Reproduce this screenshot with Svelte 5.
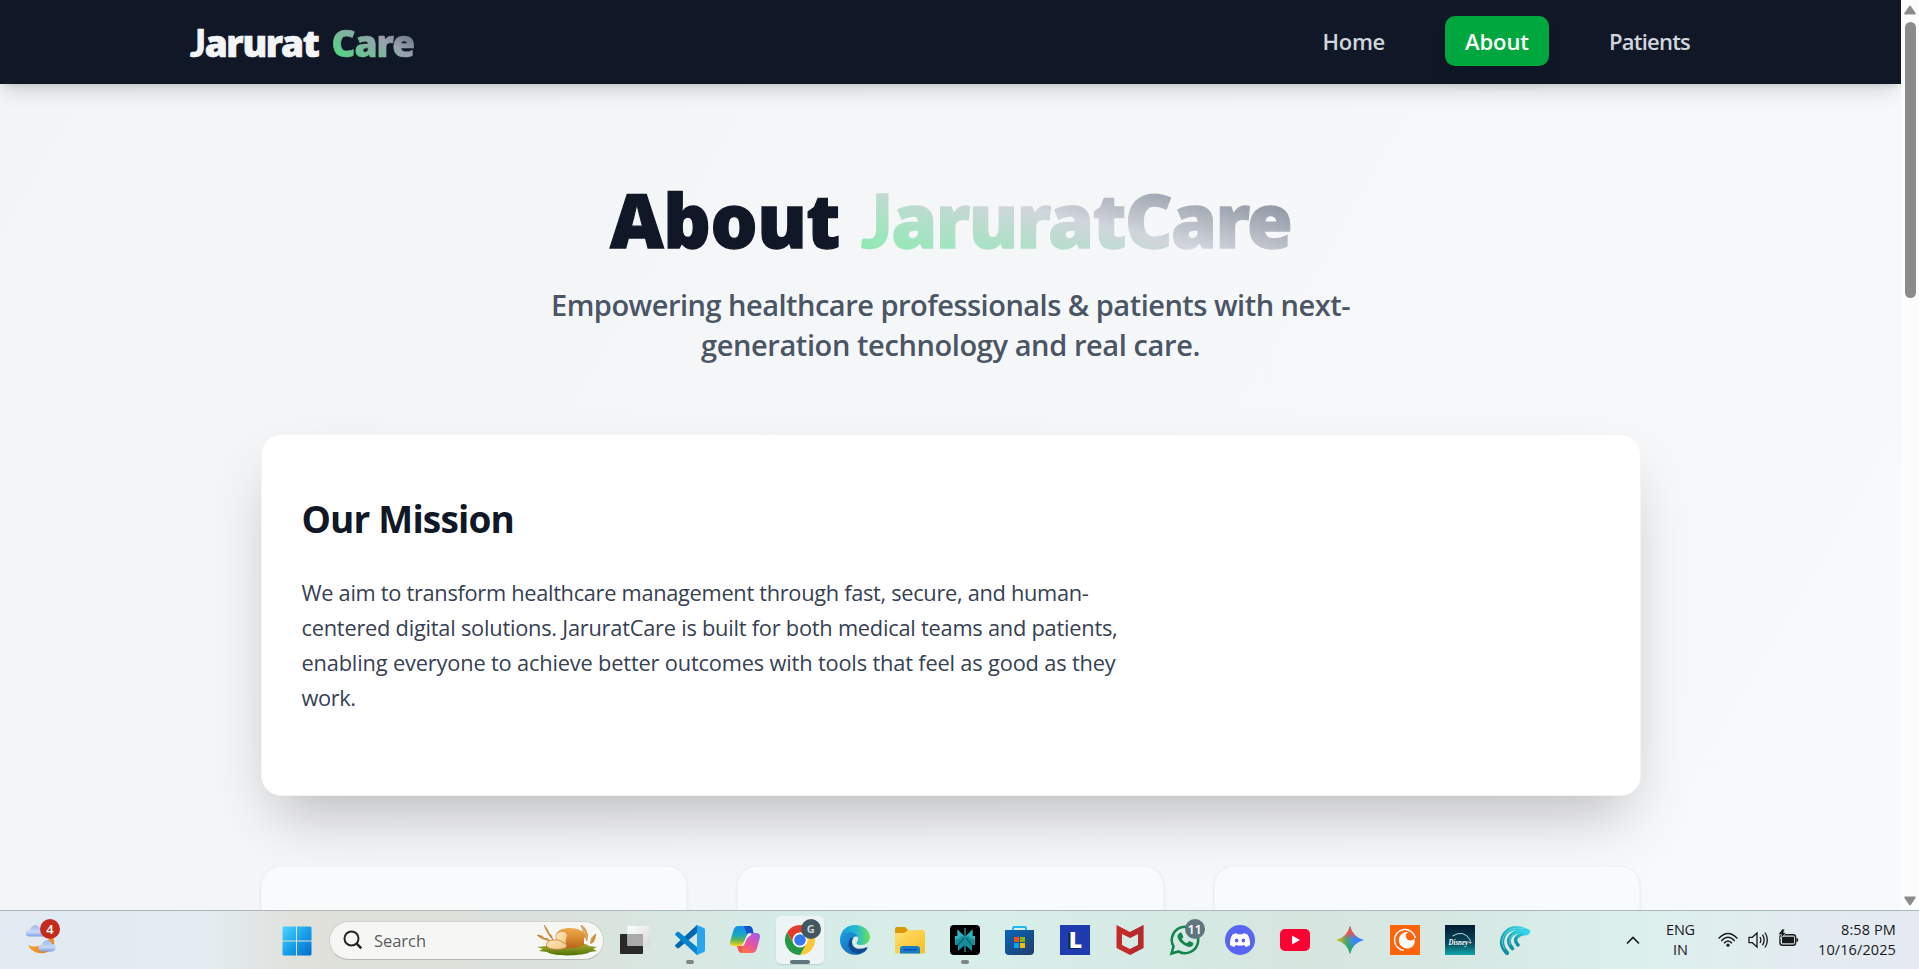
<script>
  // Tracks a line of text so that it fills the given width.
  function fit(node, width) {
    const natural = node.getBoundingClientRect().width;
    const count = node.textContent.length;
    node.style.letterSpacing = `${(width - natural) / count}px`;
  }

  const links = [
    { label: 'Home', width: 62.5 },
    { label: 'About', width: 64, active: true },
    { label: 'Patients', width: 81 }
  ];
  const subtitle = [
    { text: 'Empowering healthcare professionals & patients with next-', width: 799 },
    { text: 'generation technology and real care.', width: 499 }
  ];
  const mission = [
    { text: 'We aim to transform healthcare management through fast, secure, and human-', width: 787 },
    { text: 'centered digital solutions. JaruratCare is built for both medical teams and patients,', width: 816 },
    { text: 'enabling everyone to achieve better outcomes with tools that feel as good as they', width: 814 },
    { text: 'work.', width: 54 }
  ];
</script>

<div class="screen">
  <div class="viewport">
    <div class="page">
      <header>
        <div class="logo"><span use:fit={128.5}><span class="j">J</span>arurat</span><span class="care" use:fit={82.5}>Care</span></div>
        <nav>
          {#each links as l}
            <a class:active={l.active}><span use:fit={l.width}>{l.label}</span></a>
          {/each}
        </nav>
      </header>
      <main>
        <h1><span use:fit={230}>About</span><span class="brand" use:fit={430}><span class="j">J</span>aruratCare</span></h1>
        <div class="subtitle">
          {#each subtitle as l}<span use:fit={l.width}>{l.text}</span>{/each}
        </div>
        <section class="mission">
          <h2><span use:fit={212.5}>Our Mission</span></h2>
          <div class="copy">
            {#each mission as l}<span use:fit={l.width}>{l.text}</span>{/each}
          </div>
        </section>
        <div class="cards"><div></div><div></div><div></div></div>
      </main>
    </div>
    <div class="scroll">
      <svg width="14" height="10" viewBox="0 0 14 10"><path d="M6.1 1.2Q7 0 7.9 1.2L12.6 8Q13.2 9.6 11.8 9.6H2.2Q.8 9.6 1.4 8Z" fill="#8b8b8b"/></svg>
      <i></i>
      <svg class="down" width="14" height="10" viewBox="0 0 14 10"><path d="M6.1 8.8Q7 10 7.9 8.8L12.6 2Q13.2.4 11.8.4H2.2Q.8.4 1.4 2Z" fill="#8b8b8b"/></svg>
    </div>
  </div>

  <footer>
    <div class="weather">
      <svg width="36" height="38" viewBox="0 0 36 38">
        <defs>
          <linearGradient id="cloud" x2="0" y2="1"><stop stop-color="#9db8ec"/><stop offset=".6" stop-color="#c8daf8"/><stop offset="1" stop-color="#7d9fe0"/></linearGradient>
          <linearGradient id="moon" x2="1" y2="1"><stop stop-color="#ffb52e"/><stop offset="1" stop-color="#e7761b"/></linearGradient>
        </defs>
        <path d="M27 16c3 5 3 10 0 14-7 7-20 5-24-4 9 4 18 0 24-10z" fill="url(#moon)"/>
        <path d="M4 17.500C-1 17 0 11 5 11 6 5 14 5 15 10c3 0 4 2 4 7.500z" fill="url(#cloud)"/>
        <path d="M17 32.500c-5 0-5-6 0-6.500 1-6 9-6 10-1 5 0 5 7 0 7.500z" fill="url(#cloud)"/>
      </svg>
      <b>4</b>
    </div>

    <svg class="start" width="30" height="30" viewBox="0 0 30 30">
      <defs><linearGradient id="win" x2="1" y2="1"><stop stop-color="#4bd5ff"/><stop offset=".55" stop-color="#159ce8"/><stop offset="1" stop-color="#006dcc"/></linearGradient></defs>
      <path d="M1.500.5H14v14H.5v-13zM15 .5h13.500l1 1v13H15zM.5 15.500H14v14H1.500l-1-1zM15 15.500h14.500v13l-1 1H15z" fill="url(#win)"/>
    </svg>

    <div class="search">
      <svg width="20" height="20" viewBox="0 0 20 20" fill="none" stroke="#252525" stroke-width="2"><circle cx="8.500" cy="8.500" r="7"/><path d="m13.600 13.600 4.700 4.700" stroke-width="2.600"/></svg>
      <span use:fit={52}>Search</span>
      <svg class="bread" width="62" height="34" viewBox="0 0 62 34">
        <defs>
          <linearGradient id="crust" x2="0" y2="1"><stop stop-color="#edaa4c"/><stop offset=".5" stop-color="#d98a31"/><stop offset="1" stop-color="#b8641d"/></linearGradient>
          <linearGradient id="crumb" x2="1" y2="1"><stop stop-color="#ffebbb"/><stop offset="1" stop-color="#f0c283"/></linearGradient>
          <linearGradient id="grass" x2="0" y2="1"><stop stop-color="#a7a92d"/><stop offset="1" stop-color="#517409"/></linearGradient>
        </defs>
        <path d="M1 24 11 23 14 21h36l3 2 8 1-4 2 4 2-7 1c-5 4-37 5-43 0l-8-1 4-2z" fill="url(#grass)"/>
        <g fill="#d5a04f">
          <path d="M17 17Q10 11 8 2q4 3 5 8 4 2 4 7zM14 18Q4 17 1 12q5-1 7 3 4-1 6 3zM51 18Q49 8 45 2q5 2 6 7 2 3 0 9zM54 21q0-8 6-10 0 6-3 9z"/>
        </g>
        <path d="M8 2 17 17M45 2l6 16M1 12l13 6M60 11l-5 9" stroke="#b7772e" stroke-width=".8"/>
        <path d="M20 11c2-4 7-6 14-6s13 3 15 6c1 2 0 3-1 5v6q-8 4-18 3z" fill="url(#crust)"/>
        <path d="M20 14c-2-5 9-8 11-3 1 3-1 4-1 6v8h-9z" fill="url(#crumb)" stroke="#d08a3b" stroke-width=".6"/>
        <path d="M11 20c2-4 12-4 15-1q4 1 5 4c-1 3-9 4-14 3-4 0-8-3-6-6z" fill="url(#crumb)" stroke="#c7752a" stroke-width=".8"/>
      </svg>
    </div>

    <div class="apps">
      <div class="app">
        <svg viewBox="0 0 30 30"><defs><linearGradient id="tv" x2="1" y2="1"><stop stop-color="#fff"/><stop offset="1" stop-color="#d8d8d8"/></linearGradient></defs><rect y="9" width="23" height="20" rx="1" fill="#292929"/><rect x="7.500" y="1" width="22" height="20" rx="1" fill="url(#tv)"/><path d="M7.500 9H23v12H7.500z" fill="#aaa"/></svg>
      </div>
      <div class="app"><svg viewBox="0 0 30 30"><path d="M22 0v8L4 23q-1 .8-2 0l-1.500-1.500q-1-.9 0-1.800z" fill="#0068ac"/><path d="M22 30v-8L4 7Q3 6.200 2 7L.5 8.500q-1 .9 0 1.800z" fill="#0786cf"/><path d="m22 0 7 3q1 .6 1 1.700v20.600q0 1.100-1 1.700l-7 3q-1 0-1.500-.8Q22 29.300 22 27.500v-25Q22 .8 20.500.8 21 .1 22 0z" fill="#27a5ef"/></svg><i class="dot"></i></div>
      <div class="app"><svg viewBox="0 0 30 30">
        <defs><linearGradient id="cp1" x2="0" y2="1"><stop stop-color="#178fe9"/><stop offset=".45" stop-color="#19a5c7"/><stop offset=".72" stop-color="#68b64c"/><stop offset="1" stop-color="#ffd51a"/></linearGradient><linearGradient id="cp2" x1=".8" x2=".2" y2="1"><stop stop-color="#a65be8"/><stop offset=".5" stop-color="#e653a4"/><stop offset="1" stop-color="#ff7b32"/></linearGradient></defs>
        <path d="M8 1h11q2.500 0 3.500 3l1 4h-3q-3 0-4 3l-3 7q-1.500 3-4 3H4q-5 0-3.700-5L3.500 5Q5 1 8 1z" fill="url(#cp1)"/><path d="M14 1h5q2.500 0 3.500 3l1 4h-3q-2.500 0-3.500 2Z" fill="#1652c9"/><path d="M22 28H12q-3 0-4-4l-1-3h3q3 0 4-3l3-7q1-3 4-3h5q5 0 3.800 5l-3 11q-1.500 4-4.800 4z" fill="url(#cp2)"/><path d="M7 21h3q2.700 0 3.700-2L12 28q-3 0-4-4z" fill="#f25b48"/><path d="m17.300 9.500 1.200-1.300h3l-1 2.500q-3 .8-4.500 5l-1.700 4-1.500 1.400H10q3-.6 4.200-4z" fill="#e8f2f2"/></svg></div>
      <div class="app chrome"><div class="tile"></div><svg viewBox="0 0 30 30"><path d="M2 7.500a15 15 0 0 1 26 0H15L8.500 18.700z" fill="#e33b2e"/><path d="M28 7.500A15 15 0 0 1 15 30l6.500-11.300V7.500z" fill="#fcc934"/><path d="M2 7.500A15 15 0 0 0 15 30l6.500-11.200H8.500z" fill="#249846"/><circle cx="15" cy="15" r="7.500" fill="#fff"/><circle cx="15" cy="15" r="5.800" fill="#3478eb"/></svg><b class="badge g">G</b><i class="dot long"></i></div>
      <div class="app"><svg viewBox="0 0 30 30"><defs><linearGradient id="ed1"><stop stop-color="#1898db"/><stop offset=".55" stop-color="#26bbd0"/><stop offset="1" stop-color="#6de252"/></linearGradient><linearGradient id="ed2" x2="1" y2="1"><stop stop-color="#1c9fdf"/><stop offset="1" stop-color="#1257ac"/></linearGradient></defs><path d="M0 14C1 5 7 0 15 0c9 0 15 6 15 12 0 5-4 8-9 8-4 0-5-1-4-3 3-4 0-9-6-9C5 8 1 11 0 14z" fill="url(#ed1)"/><path d="M0 15c0-5 4-8 9-8 5 0 8 2 9 5-5-2-9 3-6 9 3 5 9 6 15 3-4 7-18 8-23 1Q0 21 0 15z" fill="url(#ed2)"/><path d="M10 14c-4 7 0 13 8 15 4-1 8-3 9.500-6q0-1-1.500-.5c-7 3-14 1-14-6 0-2 1-3 2-4-2 0-3 .5-4 1.500z" fill="#114b91"/></svg></div>
      <div class="app"><svg viewBox="0 0 30 30"><defs><linearGradient id="fold" x2="1" y2="1"><stop stop-color="#ffdf70"/><stop offset="1" stop-color="#fbbd22"/></linearGradient></defs><path d="M0 4q0-2 2-2h8l3 3v7H0z" fill="#d99a00"/><path d="M0 8h8q2 0 3-1.500Q12 5 14 5h14q2 0 2 2v20q0 1.500-1.500 1.500h-27Q0 28.500 0 27z" fill="url(#fold)"/><path d="M5 28.500V24q0-3 3-3h14q3 0 3 3v4.500z" fill="#167dce"/><path d="M8.500 24.700h13" stroke="#07549e" stroke-width="1.500"/></svg></div>
      <div class="app"><svg viewBox="0 0 30 30"><rect width="30" height="30" rx="4" fill="#000"/><path d="M15 12 7.500 4.500V11H5v9h3v6l7-6 7 6v-6h3v-9h-2.500V4.500z" fill="#168d9a"/><path d="M15 12 7.500 4.500V11zM15 12l7.500-7.500V11zM5 11h9l-9 4zM25 11h-9l9 4z" fill="#2bb5bf"/><path d="m15 12-7 8M15 12l7 8" stroke="#07535d" stroke-width="1.100"/><path d="M15 3v24" stroke="#1d8e9b" stroke-width="1.400"/></svg><i class="dot"></i></div>
      <div class="app"><svg viewBox="0 0 30 30"><defs><linearGradient id="store" x2="1" y2="1"><stop stop-color="#0866ba"/><stop offset="1" stop-color="#223c69"/></linearGradient></defs><path d="M8 7V3q0-1 1-1h11q1 0 1 1v4" fill="none" stroke="#22b8f1" stroke-width="2"/><path d="M0 5h29v21q0 4-4 4H4q-4 0-4-4z" fill="url(#store)"/><path d="M9 12h5v5H9z" fill="#f25022"/><path d="M15 12h5v5h-5z" fill="#7fba00"/><path d="M9 18h5v5H9z" fill="#00a4ef"/><path d="M15 18h5v5h-5z" fill="#ffb900"/></svg></div>
      <div class="app"><div class="letter">L</div></div>
      <div class="app"><svg viewBox="0 0 30 30"><path d="m1.500 0 13.500 7 13.500-7v23L15 30 1.500 23zM7 9v11l8 4 8-4V9l-8 4z" fill="#c22d2c" fill-rule="evenodd"/><path d="m15 7 13.500-7v23L15 30v-6l8-4V9l-8 4z" fill="#a9282b" opacity=".45"/></svg></div>
      <div class="app"><svg viewBox="0 0 30 30"><path d="m1.500 28.500 2-7A13.200 13.200 0 1 1 8.500 26.500z" fill="none" stroke="#16854d" stroke-width="2.600"/><path d="M9 8.500q2-2 3 0l1.300 3q.2.900-1.400 2.500 1.700 3 5 4.300l1.700-1.800q.6-.6 1.400-.2l3 1.500q1 .6-.2 2.700-2 2.500-6.300.7-6-2.500-8.700-8-1-3 1.200-4.700z" fill="#16854d"/></svg><b class="badge">11</b></div>
      <div class="app"><svg viewBox="0 0 30 30"><circle cx="15" cy="15" r="15" fill="#5865f2"/><path d="m11.500 8-4 1.400Q4.500 14 5 20q2 1.500 4.500 2l1.200-2q4.300 1.300 8.600 0l1.200 2q2.500-.5 4.500-2 .5-6-2.500-10.600L18.500 8l-.7 1.300h-5.600z" fill="#fff"/><ellipse cx="11.600" cy="15.500" rx="1.800" ry="2" fill="#5865f2"/><ellipse cx="18.400" cy="15.500" rx="1.800" ry="2" fill="#5865f2"/></svg></div>
      <div class="app"><svg viewBox="0 0 30 30"><rect y="4" width="30" height="22" rx="5" fill="#ff0033"/><path d="m12 10.500 8 4.500-8 4.500z" fill="#fff"/></svg></div>
      <div class="app"><svg viewBox="0 0 30 30"><defs><linearGradient id="gem"><stop stop-color="#f5bc13"/><stop offset=".38" stop-color="#4fa66b"/><stop offset=".65" stop-color="#3788ff"/><stop offset="1" stop-color="#3d83f6"/></linearGradient><linearGradient id="gemt" x2="0" y2="1"><stop stop-color="#f34a42"/><stop offset=".25" stop-color="#ee5253"/><stop offset=".46" stop-color="#ed5253" stop-opacity="0"/></linearGradient><linearGradient id="gemb" x2="0" y2="1"><stop offset=".58" stop-color="#20ad62" stop-opacity="0"/><stop offset=".85" stop-color="#20ad62"/></linearGradient></defs><path d="M15 1q2.700 11.300 14 14-11.300 2.700-14 14Q12.300 17.700 1 15 12.300 12.300 15 1z" fill="url(#gem)"/><path d="M15 1q2.700 11.300 14 14-11.300 2.700-14 14Q12.300 17.700 1 15 12.300 12.300 15 1z" fill="url(#gemt)"/><path d="M15 1q2.700 11.300 14 14-11.300 2.700-14 14Q12.300 17.700 1 15 12.300 12.300 15 1z" fill="url(#gemb)"/></svg></div>
      <div class="app"><svg viewBox="0 0 30 30"><path d="M0 0h30v30H0z" fill="#ff640a"/><path d="M14 25.500A10.500 10.500 0 1 1 25.300 13" fill="none" stroke="#fff" stroke-width="1.500"/><path d="M23.500 20.500a8.300 8.300 0 1 1-5-13.500q-3 1-2.600 4.500.6 3.500 4 4 2.700.2 4.700-2 1 3.800-1.100 7z" fill="#fff"/></svg></div>
      <div class="app"><svg viewBox="0 0 30 30"><defs><linearGradient id="dis" x2="0" y2="1"><stop stop-color="#031c31"/><stop offset=".6" stop-color="#06495a"/><stop offset="1" stop-color="#11a7ad"/></linearGradient></defs><path d="M0 0h30v30H0z" fill="url(#dis)"/><path d="M7.500 11Q19 4 25.500 15.500" fill="none" stroke="#ceeaf0" stroke-width=".9"/><text x="3.500" y="20" class="disney" textLength="23.500" lengthAdjust="spacingAndGlyphs">Disney+</text></svg></div>
      <div class="app"><svg viewBox="0 0 30 30"><defs><linearGradient id="wave" x1="0" y1="1" x2="1" y2="0"><stop stop-color="#0a8796"/><stop offset=".5" stop-color="#22b5c2"/><stop offset="1" stop-color="#35d6ea"/></linearGradient></defs><g fill="none" stroke="url(#wave)" stroke-linecap="round"><path d="M7 28Q-2 18 5 8.500 13-1 28 6.500" stroke-width="4.200"/><path d="M12.500 23.500Q5.500 16 12 9.500q5-4 12-3" stroke-width="3.600"/><path d="M18 20q-4.500-5-.5-8.500Q21 8 27 8.500" stroke-width="3.400"/></g><path d="M4.500 24Q-.5 15 6 8 13 1 24 4M10 20Q8 13 14 9" fill="none" stroke="#8fe0e5" stroke-width=".6"/></svg></div>
    </div>

    <div class="tray">
      <svg class="chev" width="14" height="9" viewBox="0 0 14 9" fill="none" stroke="#1a1a1a" stroke-width="1.700"><path d="m1 7.500 6-6 6 6"/></svg>
      <div class="lang"><span use:fit={29}>ENG</span><span use:fit={15}>IN</span></div>
      <svg class="wifi" width="20" height="16" viewBox="0 0 20 16" fill="none" stroke="#1a1a1a" stroke-width="1.400"><path d="M.6 6.500Q10-3.500 19.400 6.500M3.300 9Q10 1.600 16.700 9M6 11.300q4-4.600 8 0"/><circle cx="10" cy="13.200" r="1.600" fill="#1a1a1a" stroke="none"/></svg>
      <svg class="vol" width="21" height="18" viewBox="0 0 21 18" fill="none" stroke="#1a1a1a" stroke-width="1.300"><path d="M1 6.300h3.300L9 2v14l-4.700-4.300H1zM12 6q1.700 3 0 6M14.500 3.700q3.300 5.300 0 10.600M17 1.500q4.700 7.500 0 15"/></svg>
      <svg class="bat" width="21" height="18" viewBox="0 0 21 18"><rect x="2" y="5.700" width="15.600" height="10.600" rx="2.500" fill="none" stroke="#1a1a1a" stroke-width="1.400"/><path d="M4 7.700h12v6.600H4z" fill="#1a1a1a"/><path d="M18.500 9q1.800 0 1.800 2t-1.800 2z" fill="#1a1a1a"/><path d="M4.200 0h2.600L5.700 3.500h2.600L2.600 10l1-4.300H0z" fill="#1a1a1a" stroke="#e3edf0" stroke-width=".7"/></svg>
      <div class="clock"><span use:fit={55}>8:58 PM</span><span use:fit={78}>10/16/2025</span></div>
    </div>
  </footer>
</div>

<style>
  :global(body) { margin: 0; overflow: hidden; }
  .screen { width: 1919px; height: 969px; display: flex; flex-direction: column; overflow: hidden; font-family: "Open Sans", "Noto Sans", sans-serif; }
  .screen :global(*) { box-sizing: border-box; }
  svg { display: block; flex: none; }
  span { white-space: nowrap; }
  .viewport { height: 910px; display: flex; overflow: hidden; }
  .page { width: 1901px; height: 910px; overflow: hidden; background: linear-gradient(120deg, #f3f4f6, #f8f9fb); }
  header { height: 84px; padding: 0 191px 2px 190px; display: flex; align-items: center; justify-content: space-between; background: #101828; box-shadow: 0 12px 19px -4px rgba(0,0,0,.12), 0 5px 8px -4px rgba(0,0,0,.12); }
  .logo { display: flex; gap: 13px; padding-top: 4px; font-family: "Noto Sans", "Open Sans", sans-serif; font-size: 37px; font-weight: 900; line-height: 50px; color: #f3f4f6; -webkit-text-stroke: .7px #f3f4f6; }
  .j { font-family: Lato, "Noto Sans", sans-serif; font-weight: 900; }
  .care { background: linear-gradient(to top right, #4bdb7f 10%, #99a1af 60%, #4a5565); background-clip: text; -webkit-background-clip: text; color: transparent; -webkit-text-stroke: .7px transparent; }
  nav { display: flex; gap: 40px; }
  nav a { height: 50px; padding: 0 20px; border-radius: 10px; font-size: 22px; line-height: 50px; font-weight: 600; color: #d1d5dc; }
  nav a.active { background: #00a63e; color: #fff; box-shadow: 0 12px 19px -4px rgba(0,0,0,.1); }
  main { padding: 98px 260.500px 0; }
  h1 { margin: 0; display: flex; justify-content: center; gap: 21px; height: 75px; align-items: center; font-family: "Noto Sans", "Open Sans", sans-serif; font-size: 74px; font-weight: 900; line-height: 100px; color: #101828; -webkit-text-stroke: 1.300px #101828; }
  .brand { background: linear-gradient(to top right, #7bf1a8, #d1d5dc 50%, #6a7282); background-clip: text; -webkit-background-clip: text; color: transparent; -webkit-text-stroke: 1.300px transparent; }
  .subtitle { margin-top: 28px; display: flex; flex-direction: column; align-items: center; font-size: 29px; line-height: 40px; font-weight: 600; color: #4a5565; }
  .mission { margin-top: 69px; height: 362px; padding: 59px 40px 0; border: 1px solid #f3f4f6; border-radius: 20px; background: #fff; box-shadow: 0 31px 62px -15px rgba(0,0,0,.25); }
  h2 { margin: 0; display: flex; font-size: 37px; line-height: 50px; color: #101828; }
  .copy { margin-top: 31px; display: flex; flex-direction: column; align-items: flex-start; font-size: 21.800px; line-height: 35px; color: #364153; }
  .cards { margin-top: 70px; display: grid; grid-template-columns: repeat(3, 1fr); gap: 50px; }
  .cards div { height: 200px; border-radius: 20px; border: 1px solid #f3f4f6; background: #f9fafb; box-shadow: 0 1px 3px rgba(0,0,0,.1); }
  .scroll { width: 18px; height: 910px; padding: 5px 2px 4px; display: flex; flex-direction: column; align-items: center; background: #fcfcfc; }
  .scroll i { width: 11px; height: 276px; margin-top: 7px; border-radius: 6px; background: #8b8b8b; }
  .scroll .down { margin-top: auto; }
  footer { height: 59px; border-top: 1px solid #aeb8b9; display: flex; align-items: center; background: linear-gradient(90deg, #e2eaf2 0, #e3ecf0 210px, #dfe1da 300px, #dbe2dc 560px, #d6ebe6 770px, #d8eee9 1000px, #d5e9e3 1200px, #d7e5df 1300px, #d7e9e4 1480px, #dbf0ed 1640px, #e3ebf0 1810px, #e4e9f1 100%); }
  .weather { position: relative; width: 36px; margin-left: 25px; height: 58px; padding-top: 8px; }
  .weather b { position: absolute; left: 15px; top: 8px; width: 20px; height: 20px; border-radius: 50%; background: #c42b1c; color: #fff; font-size: 13px; font-weight: 600; line-height: 20px; text-align: center; }
  .start { margin-left: 221px; margin-top: 1px; }
  .search { margin-left: 17px; width: 274.500px; height: 39px; padding: 0 5px 0 13px; border: 1px solid #cdd0cc; border-bottom-color: #b4b8b4; border-radius: 20px; background: #f6f6f5; display: flex; align-items: center; font-size: 16.500px; color: #5c5c5c; }
  .search span { margin-left: 11px; padding-top: 1px; }
  .bread { margin-left: auto; }
  .apps { margin-left: 16px; display: flex; gap: 25px; }
  .app { position: relative; width: 30px; height: 30px; }
  .app svg { position: relative; width: 30px; height: 30px; overflow: visible; }
  .tile { position: absolute; left: -9px; top: -9px; width: 48px; height: 48px; border-radius: 5px; background: #ecf5f3; box-shadow: 0 1px 1px rgba(0,0,0,.12); }
  .dot { position: absolute; left: 11px; bottom: -9px; width: 8px; height: 4px; border-radius: 2px; background: #7e8583; }
  .dot.long { left: 5px; width: 20px; background: #63727f; }
  .badge { position: absolute; left: 15px; top: -6px; width: 20px; height: 20px; border-radius: 50%; background: #5f7681; color: #fff; font-size: 13px; line-height: 20px; font-weight: 600; text-align: center; letter-spacing: -.5px; }
  .badge.g { left: 16px; background: #435761; color: #c9d4d7; font-size: 11px; font-weight: 700; }
  .letter { width: 30px; height: 30px; background: #1e3caf; color: #fff; font-size: 23px; line-height: 29px; font-weight: 800; text-align: center; text-shadow: -1px 1px #102657, -2px 1px #102657; padding-left: 2px; }
  .disney { font: italic bold 8px "Liberation Serif", serif; fill: #fff; }
  .tray { margin-left: auto; margin-right: 23px; display: flex; align-items: center; font-size: 14.500px; line-height: 20px; color: #191919; }
  .lang { margin-left: 26px; display: flex; flex-direction: column; align-items: center; }
  .wifi { margin-left: 23px; }
  .vol { margin-left: 10px; }
  .bat { margin-left: 9px; margin-top: -4px; }
  .clock { margin-left: 19px; display: flex; flex-direction: column; align-items: flex-end; }
</style>
